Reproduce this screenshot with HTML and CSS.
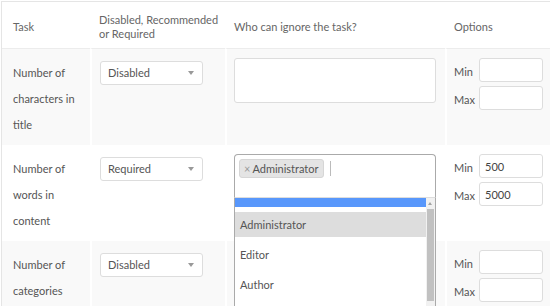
FILE: index.html
```html
<!DOCTYPE html>
<html lang="en">
<head>
    <meta charset="UTF-8">
    <title>Task settings</title>
    <link rel="stylesheet" href="styles.css">
</head>
<body>
    <div class="wrap">
        <table class="tasks">
            <thead>
                <tr>
                    <th class="c-task">Task</th>
                    <th class="c-level">Disabled, Recommended or Required</th>
                    <th class="c-who">Who can ignore the task?</th>
                    <th class="c-opt">Options</th>
                </tr>
            </thead>
            <tbody>
                <tr class="alt">
                    <td>Number of characters in title</td>
                    <td><div class="select">Disabled</div></td>
                    <td><textarea class="roles"></textarea></td>
                    <td>
                        <div class="range"><label>Min</label><input type="text"></div>
                        <div class="range"><label>Max</label><input type="text"></div>
                    </td>
                </tr>
                <tr>
                    <td>Number of words in content</td>
                    <td><div class="select">Required</div></td>
                    <td>
                        <div class="multi">
                            <div class="multi-box">
                                <span class="tag"><span class="tag-x">×</span>Administrator</span>
                                <span class="caret"></span>
                            </div>
                            <div class="dropdown">
                                <div class="dd-search"></div>
                                <ul class="dd-list">
                                    <li class="hl">Administrator</li>
                                    <li>Editor</li>
                                    <li>Author</li>
                                </ul>
                                <div class="dd-scroll"><div class="dd-thumb"></div></div>
                            </div>
                        </div>
                    </td>
                    <td>
                        <div class="range"><label>Min</label><input type="text" value="500"></div>
                        <div class="range"><label>Max</label><input type="text" value="5000"></div>
                    </td>
                </tr>
                <tr class="alt">
                    <td>Number of categories</td>
                    <td><div class="select">Disabled</div></td>
                    <td><textarea class="roles"></textarea></td>
                    <td>
                        <div class="range"><label>Min</label><input type="text"></div>
                        <div class="range"><label>Max</label><input type="text"></div>
                    </td>
                </tr>
            </tbody>
        </table>
    </div>
</body>
</html>
```

FILE: styles.css
```css
html, body {
    margin: 0;
    overflow: hidden;
    background: #fff;
}

body {
    font-family: Lato, 'Open Sans', sans-serif;
    font-size: 11px;
    color: #555;
}

.wrap {
    margin: 1px 0 0 1px;
    border-left: 1px solid #e5e5e5;
    border-top: 1px solid #e5e5e5;
    width: 600px;
}

.tasks {
    border-collapse: separate;
    border-spacing: 0;
    table-layout: fixed;
    width: 598px;
}

.tasks th,
.tasks td {
    box-sizing: border-box;
    text-align: left;
    font-weight: normal;
}

.tasks th + th,
.tasks td + td {
    border-left: 2px solid #fff;
}

.c-task { width: 88px; }
.c-level { width: 135px; }
.c-who { width: 220px; }
.c-opt { width: 155px; }

.tasks th {
    height: 47px;
    padding: 3px 0 0 7px;
    line-height: 14px;
    vertical-align: middle;
    color: #666;
    border-bottom: 1px solid #ececec;
}

.tasks th:first-child {
    padding-left: 11px;
}

.tasks td {
    vertical-align: top;
    padding: 9px 7px 8px 7px;
}

.tasks td:first-child {
    padding: 11px 4px 7px 11px;
    line-height: 26px;
}

.tasks tr.alt td {
    background: #f9f9f9;
}

.select {
    position: relative;
    box-sizing: border-box;
    width: 103px;
    height: 24px;
    margin: 3px 0 0 1px;
    padding: 0 0 0 7px;
    line-height: 22px;
    border: 1px solid #ddd;
    border-radius: 3px;
    background: #fff;
}

.select:after {
    content: '';
    position: absolute;
    right: 8px;
    top: 9px;
    border-left: 3px solid transparent;
    border-right: 3px solid transparent;
    border-top: 4px solid #999;
}

.roles {
    display: block;
    box-sizing: border-box;
    width: 202px;
    height: 45px;
    margin: 0;
    border: 1px solid #ddd;
    border-radius: 3px;
    background: #fff;
    resize: none;
}

.range {
    display: flex;
    align-items: center;
    margin-bottom: 4px;
}

.range label {
    width: 25px;
    padding-top: 2px;
}

.range input {
    box-sizing: border-box;
    width: 64px;
    height: 24px;
    padding: 0 5px;
    border: 1px solid #ddd;
    border-radius: 3px;
    font-family: Lato, 'Open Sans', sans-serif;
    font-size: 11px;
    color: #444;
}

.multi {
    position: relative;
}

.multi-box {
    box-sizing: border-box;
    width: 202px;
    height: 44px;
    padding: 4px 4px 0 4px;
    border: 1px solid #aaa;
    border-bottom: none;
    border-radius: 4px 4px 0 0;
    background: #fff;
    display: flex;
    align-items: flex-start;
}

.tag {
    display: inline-block;
    height: 19px;
    line-height: 17px;
    box-sizing: border-box;
    padding: 0 4px;
    border: 1px solid #d6d6d6;
    border-radius: 3px;
    background: #e4e4e4;
    color: #555;
}

.tag-x {
    color: #999;
    margin-right: 2px;
}

.caret {
    display: inline-block;
    width: 1px;
    height: 15px;
    margin: 2px 0 0 6px;
    background: #bbb;
}

.dropdown {
    position: absolute;
    top: 43px;
    left: 0;
    box-sizing: border-box;
    width: 202px;
    height: 120px;
    border-left: 1px solid #aaa;
    border-right: 1px solid #aaa;
    border-top: 1px solid #ddd;
    background: #fff;
    overflow: hidden;
}

.dd-search {
    height: 9px;
    margin-right: 9px;
    background: #5897fb;
}

.dd-list {
    list-style: none;
    margin: 5px 9px 0 0;
    padding: 0;
}

.dd-list li {
    height: 25px;
    line-height: 25px;
    padding-left: 5px;
    margin-bottom: 5px;
    color: #555;
}

.dd-list li.hl {
    background: #ddd;
}

.dd-scroll {
    position: absolute;
    top: 0;
    right: 0;
    width: 9px;
    bottom: 0;
    background: #f1f1f1;
}

.dd-scroll:before {
    content: '';
    position: absolute;
    top: 4px;
    left: 2px;
    border-left: 2px solid transparent;
    border-right: 2px solid transparent;
    border-bottom: 3px solid #a3a3a3;
}

.dd-thumb {
    position: absolute;
    top: 11px;
    left: 1px;
    right: 1px;
    height: 92px;
    background: #c1c1c1;
}
```
